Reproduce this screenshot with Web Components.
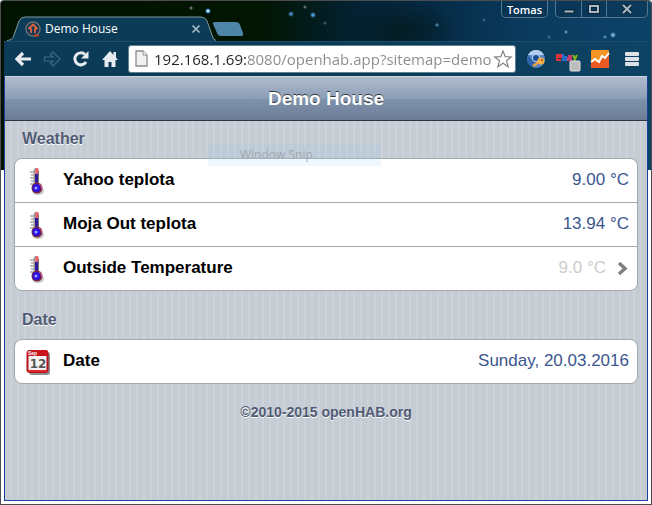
<!DOCTYPE html>
<html lang="en">
<head>
<meta charset="utf-8">
<title>Demo House</title>
<style>
  html, body {
    height: 100%;
    margin: 0;
  }
  body {
    font-family: "Liberation Sans", Arial, sans-serif;
    background: #fff;
  }
</style>
</head>
<body>

<browser-window>
  <browser-tab slot="tabs" label="Demo House"></browser-tab>
  <window-buttons slot="buttons" user="Tomas"></window-buttons>
  <browser-toolbar slot="toolbar" url="192.168.1.69:8080/openhab.app?sitemap=demo"></browser-toolbar>

  <sitemap-page heading="Demo House">
    <item-group label="Weather">
      <item-row icon="temperature" label="Yahoo teplota" value="9.00 °C"></item-row>
      <item-row icon="temperature" label="Moja Out teplota" value="13.94 °C"></item-row>
      <item-row icon="temperature" label="Outside Temperature" value="9.0 °C" href="#outside"></item-row>
    </item-group>
    <item-group label="Date">
      <item-row icon="calendar" label="Date" value="Sunday, 20.03.2016"></item-row>
    </item-group>
    <span slot="footer">©2010-2015 openHAB.org</span>
  </sitemap-page>

  <snip-label slot="overlay">Window Snip</snip-label>
</browser-window>

<script>
class BrowserWindow extends HTMLElement {
  constructor() {
    super();
    this.attachShadow({mode: "open"});
    this.shadowRoot.innerHTML = `
      <style>
        :host {
          display: flex;
          flex-direction: column;
          position: relative;
          box-sizing: border-box;
          min-height: 100vh;
          padding: 0 3px 3px 4px;
          border: 1px solid #4c4d50;
          border-width: 1px 1px 1px 0;
          border-radius: 4px 4px 0 0;
          background: #fff;
          box-shadow: inset 1px 0 #4c4d50;
          overflow: hidden;
        }
        /* night sky theme behind the frame */
        .sky {
          position: absolute;
          inset: 0 0 auto 1px;
          height: 169px;
          background:
            radial-gradient(circle at 190px 7px, #888c 0 1px, transparent 2px),
            radial-gradient(circle at 207px 10px, #bde0ff 0 1px, #2570b0 2px, transparent 3px),
            radial-gradient(circle at 290px 13px, #3d82bc 0 1px, transparent 3px),
            radial-gradient(circle at 304px 6px, #57655c 0 1px, transparent 2px),
            radial-gradient(circle at 312px 14px, #4c99d4 0 1px, transparent 3px),
            radial-gradient(circle at 324px 22px, #3c5361 0 1px, transparent 2px),
            radial-gradient(circle at 436px 24px, #427fa3 0 1px, transparent 2px),
            radial-gradient(circle at 483px 19px, #2d5c7d 0 1px, transparent 2px),
            radial-gradient(circle at 548px 36px, #316a8b 0 1px, transparent 2px),
            radial-gradient(circle at 565px 31px, #5195b9 0 1px, transparent 2px),
            radial-gradient(circle at 604px 36px, #4b86a8 0 1px, transparent 2px),
            radial-gradient(circle at 612px 34px, #6eb2dd 0 1px, transparent 3px),
            radial-gradient(ellipse 60px 30px at 400px 30px, #041c22, transparent),
            linear-gradient(90deg, #011300 0, #021502 40%, #032234 55%, #052a45 66%, #0b3c60 82%, #0c4266 100%);
        }
        .bar {
          position: relative;
          display: flex;
          align-items: flex-end;
          justify-content: space-between;
          height: 40px;
        }
        main {
          position: relative;
          flex: 1;
          display: flex;
          border: 1px solid #1a3f9c;
          border-top: 0;
        }
        ::slotted([slot="toolbar"]) { position: relative; }
        ::slotted(sitemap-page) { flex: 1; }
      </style>
      <div class="sky"></div>
      <div class="bar">
        <slot name="tabs"></slot>
        <slot name="buttons"></slot>
      </div>
      <slot name="toolbar"></slot>
      <main><slot></slot></main>
      <slot name="overlay"></slot>
    `;
  }
}

class BrowserTab extends HTMLElement {
  constructor() {
    super();
    this.attachShadow({mode: "open"});
    this.shadowRoot.innerHTML = `
      <style>
        :host {
          display: flex;
          align-items: flex-end;
          font: 12px "Open Sans", "Noto Sans", sans-serif;
          color: #fff;
        }
        .tab {
          position: relative;
          display: flex;
          align-items: center;
          box-sizing: border-box;
          width: 212px;
          height: 25px;
          padding: 0 15px 0 21px;
        }
        .shape {
          position: absolute;
          inset: 0;
        }
        .icon, .label, button { position: relative; }
        .label { margin-left: 4px; flex: 1; }
        button {
          display: flex;
          padding: 0;
          border: 0;
          background: none;
        }
        .new { margin: 0 0 5px -4px; }
      </style>
      <div class="tab">
        <svg class="shape" width="212" height="25" viewBox="0 0 212 25">
          <path d="M3 25C8 24 9 22 10 19L15 5Q17 1 21 1H197Q201 1 203 5L208 19Q209 24 212 25Z" fill="#0b3b57"/>
          <path d="M3 24.500C8 24 9 22 10 19L15 5Q17 1 21 1H197Q201 1 203 5L208 19Q209 24 212 24.500" fill="none" stroke="#8099a0"/>
        </svg>
        <svg class="icon" width="16" height="16" viewBox="0 0 16 16" fill="none">
          <circle cx="8" cy="8" r="7" stroke="#6b6d70" stroke-width="1.500"/>
          <path d="M3.500 8L8 3.500L12.500 8M6 7V12M10 7V12" stroke="#e8613a" stroke-width="1.800"/>
          <path d="M9 14.500H14" stroke="#c9441f" stroke-width="2"/>
        </svg>
        <span class="label"></span>
        <button aria-label="Close tab">
          <svg width="10" height="10" viewBox="0 0 10 10"><path d="M1.500 1.500L8.500 8.500M8.500 1.500L1.500 8.500" stroke="#a9bcc6" stroke-width="1.700"/></svg>
        </button>
      </div>
      <button class="new" aria-label="New tab">
        <svg width="32" height="14" viewBox="0 0 32 14"><path d="M3 0H24Q27 0 28 3L31 11Q32 14 29 14H9Q6 14 5 11L1 2Q0 0 3 0Z" fill="#4e86a8"/></svg>
      </button>
    `;
  }
  connectedCallback() {
    this.shadowRoot.querySelector(".label").textContent = this.getAttribute("label");
  }
}

class WindowButtons extends HTMLElement {
  constructor() {
    super();
    this.attachShadow({mode: "open"});
    this.shadowRoot.innerHTML = `
      <style>
        :host {
          display: flex;
          align-self: flex-start;
          gap: 7px;
        }
        button {
          display: flex;
          align-items: center;
          justify-content: center;
          box-sizing: border-box;
          height: 17px;
          padding: 0;
          border: 0;
          background: none;
          color: #fff;
          font: 600 11px "Open Sans", "Noto Sans", sans-serif;
        }
        .user, .group {
          border: 1px solid #55788e;
          border-top: 0;
          border-radius: 0 0 5px 5px;
          background: #0a2f4a66;
        }
        .user { width: 47px; }
        .group { display: flex; height: 17px; box-sizing: border-box; }
        .group button { width: 25px; height: 16px; }
        .group button + button { border-left: 1px solid #55788e; }
        .group button:last-child { width: 41px; }
      </style>
      <button class="user"></button>
      <div class="group">
        <button aria-label="Minimize"><svg width="12" height="10" viewBox="0 0 12 10"><rect x="1" y="6" width="10" height="3" fill="#a9bac6" stroke="#0a2233"/></svg></button>
        <button aria-label="Maximize"><svg width="12" height="10" viewBox="0 0 12 10"><path d="M2 2H10V8H2Z" fill="none" stroke="#0a2233" stroke-width="4"/><path d="M2 2H10V8H2Z" fill="none" stroke="#a9bac6" stroke-width="2"/></svg></button>
        <button aria-label="Close"><svg width="12" height="10" viewBox="0 0 12 10"><path d="M2 1L10 9M10 1L2 9" stroke="#0a2233" stroke-width="4"/><path d="M2 1L10 9M10 1L2 9" stroke="#a9bac6" stroke-width="2"/></svg></button>
      </div>
    `;
  }
  connectedCallback() {
    this.shadowRoot.querySelector(".user").textContent = this.getAttribute("user");
  }
}

class BrowserToolbar extends HTMLElement {
  constructor() {
    super();
    this.attachShadow({mode: "open"});
    this.shadowRoot.innerHTML = `
      <style>
        :host {
          display: flex;
          align-items: center;
          height: 35px;
          padding-left: 4px;
          background: linear-gradient(90deg, #0b3b57, #0b3b57 60%, #0d4364);
          box-shadow: inset 0 1px #1b4f6d;
        }
        button {
          display: flex;
          align-items: center;
          justify-content: center;
          flex: none;
          width: 29px;
          height: 28px;
          padding: 0;
          border: 0;
          background: none;
        }
        .ext { width: 32px; }
        .omnibox {
          display: flex;
          align-items: center;
          flex: 1;
          min-width: 0;
          box-sizing: border-box;
          height: 28px;
          margin: 0 4px;
          padding: 0 2px 0 6px;
          border: 1px solid #5e8290;
          border-radius: 3px;
          background: #fff;
        }
        .omnibox button { width: 20px; }
        .page { flex: none; margin-right: 6px; }
        input {
          flex: 1;
          min-width: 0;
          height: 24px;
          padding: 0;
          border: 0;
          outline: 0;
          font: 15px "Open Sans", "Noto Sans", sans-serif;
          /* host part is dark, port and path are grey */
          background: linear-gradient(90deg, #222 92px, #8a8a8a 92px);
          -webkit-background-clip: text;
          background-clip: text;
          -webkit-text-fill-color: transparent;
        }
      </style>
      <button aria-label="Back"><svg width="18" height="16" viewBox="0 0 18 16"><path d="M9 2L3 8L9 14M3 8H17" fill="none" stroke="#e8ecf0" stroke-width="3.200"/></svg></button>
      <button aria-label="Forward"><svg width="18" height="16" viewBox="0 0 18 16"><path d="M1.500 6H10L7.500 3.500L10 1L17 8L10 15L7.500 12.500L10 10H1.500Z" fill="none" stroke="#3f6880" stroke-width="1.200"/></svg></button>
      <button aria-label="Reload"><svg width="18" height="18" viewBox="0 0 18 18"><path d="M14 12A6 6 0 1 1 13 4.500" fill="none" stroke="#e8ecf0" stroke-width="3"/><path d="M16.500 1V8.500H9Z" fill="#e8ecf0"/></svg></button>
      <button aria-label="Home"><svg width="18" height="18" viewBox="0 0 18 18"><path d="M9 1L1 10H3.500V17H7.500V12H10.500V17H14.500V10H17L15 7.500V2H12.500V5Z" fill="#e8ecf0"/></svg></button>
      <div class="omnibox">
        <svg class="page" width="13" height="17" viewBox="0 0 13 17"><path d="M1 1H8L12 5V16H1Z" fill="#f1f1f1" stroke="#8c8c8c" stroke-width="1.300"/><path d="M8 1V5H12" fill="#fff" stroke="#8c8c8c"/></svg>
        <input type="text" aria-label="Address">
        <button aria-label="Bookmark"><svg width="20" height="18" viewBox="0 0 18 18"><path d="M9 1L11.200 6.700L17.200 7L12.500 10.800L14.100 16.700L9 13.300L3.900 16.700L5.500 10.800L0.800 7L6.800 6.700Z" fill="#fff" stroke="#808080" stroke-width="1.200"/></svg></button>
      </div>
      <button class="ext" aria-label="Chromium key">
        <svg width="20" height="20" viewBox="0 0 20 20"><circle cx="10" cy="10" r="9" fill="#5588c8"/><path d="M2 6A9 9 0 0 1 18 6L10 6.500Z" fill="#b4cfee"/><path d="M2 6A9 9 0 0 0 8 18.700L11 13L6 11Z" fill="#2f64a8"/><circle cx="10" cy="9" r="4.200" fill="#a9c9ea"/><circle cx="10" cy="9" r="3" fill="#1d4f96"/><path d="M13 13L7 17" stroke="#f2a33a" stroke-width="2.400"/><circle cx="15" cy="12" r="3.500" fill="#f5ad48"/><circle cx="16" cy="11" r="1" fill="#8e5618"/></svg>
      </button>
      <button class="ext" aria-label="ebay">
        <svg width="26" height="26" viewBox="0 0 26 26"><g fill="none" stroke-width="2"><path d="M2 11H6V9H2V14H6" stroke="#e53238"/><path d="M8 8V14H11V11H9" stroke="#2b6fd6"/><path d="M13 10H16V14H13V12H15" stroke="#c43c6a"/><path d="M18 9L20 13M22 9L19 15" stroke="#86b817"/></g><rect x="15" y="15" width="10" height="10" rx="1" fill="#bdbdbd" stroke="#e2e2e2"/></svg>
      </button>
      <button class="ext" aria-label="Analytics">
        <svg width="20" height="20" viewBox="0 0 20 20"><rect x="1" y="1" width="18" height="18" rx="1" fill="#f79426"/><path d="M1 14L5 12L9 14L12 8L15 10L19 5V19H1Z" fill="#ea5a22"/><path d="M1 13L5 10L9 13L12 7L15 9L19 4" fill="none" stroke="#fff" stroke-width="2"/></svg>
      </button>
      <button class="ext" aria-label="Menu">
        <svg width="14" height="16" viewBox="0 0 14 16" fill="#dde2ea"><rect y="1" width="14" height="4" rx="1"/><rect y="6" width="14" height="4" rx="1"/><rect y="11" width="14" height="4" rx="1"/></svg>
      </button>
    `;
  }
  connectedCallback() {
    this.shadowRoot.querySelector("input").value = this.getAttribute("url");
  }
}

class SitemapPage extends HTMLElement {
  constructor() {
    super();
    this.attachShadow({mode: "open"});
    this.shadowRoot.innerHTML = `
      <style>
        :host {
          display: block;
          background: repeating-linear-gradient(90deg, #c5ccd4 0 5px, #cbd2d8 5px 7px);
          color: #505a74;
        }
        header {
          display: flex;
          align-items: center;
          justify-content: center;
          box-sizing: border-box;
          height: 45px;
          border-top: 1px solid #cdd5df;
          border-bottom: 1px solid #2d3642;
          background: linear-gradient(#b0bccd, #8b9db5 50%, #8094ae 50%, #6b7b95);
        }
        h1 {
          margin: 0;
          font-size: 19px;
          line-height: 24px;
          color: #fff;
          text-shadow: 0 -1px #2d3642;
        }
        footer {
          padding-top: 19px;
          font-size: 14px;
          line-height: 18px;
          font-weight: bold;
          text-align: center;
          text-shadow: 0 1px #fff;
        }
      </style>
      <header><h1></h1></header>
      <slot></slot>
      <footer><slot name="footer"></slot></footer>
    `;
  }
  connectedCallback() {
    this.shadowRoot.querySelector("h1").textContent = this.getAttribute("heading");
  }
}

class ItemGroup extends HTMLElement {
  constructor() {
    super();
    this.attachShadow({mode: "open"});
    this.shadowRoot.innerHTML = `
      <style>
        :host {
          display: block;
          padding: 8px 9px 0;
        }
        :host(:not(:first-child)) { padding-top: 19px; }
        h2 {
          margin: 0 8px 9px;
          font-size: 16px;
          line-height: 20px;
          color: #505a74;
          text-shadow: 0 1px #fff;
        }
        .list {
          border: 1px solid #a4a9ad;
          border-radius: 8px;
          background: #fff;
          overflow: hidden;
        }
        ::slotted(item-row:not(:first-child)) { border-top: 1px solid #a4a9ad; }
      </style>
      <h2></h2>
      <div class="list"><slot></slot></div>
    `;
  }
  connectedCallback() {
    this.shadowRoot.querySelector("h2").textContent = this.getAttribute("label");
  }
}

const icons = {
  temperature: `
    <svg width="26" height="30" viewBox="0 0 26 30">
      <ellipse cx="13" cy="25" rx="6" ry="4" fill="#9998"/>
      <path d="M5 6H9M6 9H9M5 12H9M6 15H9M5 18H9" stroke="#a8a8a8" stroke-width="1.500"/>
      <path d="M8.500 4Q10.500 0 13.500 3V17H8.500Z" fill="#a29c9c"/>
      <path d="M10.500 3Q12 1 13.500 3V8H10.500Z" fill="#f0606a"/>
      <rect x="10" y="8" width="3" height="13" fill="#301a9c"/>
      <path d="M13.500 5V18" stroke="#777"/>
      <circle cx="12" cy="22" r="5.500" fill="#7b2540"/>
      <circle cx="11.500" cy="22" r="4" fill="#2a12e0"/>
      <circle cx="11" cy="22" r="1.500" fill="#a99cff"/>
      <path d="M14 18Q17 19 17 23" fill="none" stroke="#ef7180"/>
    </svg>`,
  calendar: `
    <svg width="26" height="30" viewBox="0 0 26 30">
      <rect x="4" y="5" width="21" height="23" rx="3" fill="#555a"/>
      <rect x="2.500" y="4" width="20" height="21" rx="2.500" fill="#f4f4f4" stroke="#b3121a" stroke-width="2"/>
      <path d="M2 9V6Q2 3 4 3H21Q23 3 23 6V9Z" fill="#c8141c"/>
      <rect x="3" y="23" width="19" height="2" fill="#e2262e"/>
      <text x="3" y="8" font-family="Liberation Sans" font-size="5" font-weight="bold" fill="#fff">Sep</text>
      <text x="13" y="21" font-family="DejaVu Sans" font-size="12" font-weight="bold" text-anchor="middle" fill="#555">12</text>
    </svg>`
};

class ItemRow extends HTMLElement {
  constructor() {
    super();
    this.attachShadow({mode: "open"});
  }
  connectedCallback() {
    const href = this.getAttribute("href");
    const tag = href ? "a" : "div";
    this.shadowRoot.innerHTML = `
      <style>
        :host {
          display: block;
          font-size: 17px;
          line-height: 20px;
        }
        .row {
          display: flex;
          align-items: center;
          height: 43px;
          padding: 0 8px 0 10px;
          color: #3b5690;
          text-decoration: none;
        }
        a.row { color: #ccc; }
        .label {
          flex: 1;
          margin-left: 12px;
          font-weight: bold;
          color: #000;
        }
        .label, .value { padding-bottom: 2px; }
        .chevron { margin-left: 11px; }
      </style>
      <${tag} class="row" ${href ? `href="${href}"` : ""}>
        ${icons[this.getAttribute("icon")]}
        <span class="label">${this.getAttribute("label")}</span>
        <span class="value">${this.getAttribute("value")}</span>
        ${href ? `<svg class="chevron" width="12" height="14" viewBox="0 0 12 14"><path d="M2 1L8 6.500L2 12" fill="none" stroke="#808080" stroke-width="3.500"/></svg>` : ""}
      </${tag}>
    `;
  }
}

class SnipLabel extends HTMLElement {
  constructor() {
    super();
    this.attachShadow({mode: "open"});
    this.shadowRoot.innerHTML = `
      <style>
        :host {
          position: absolute;
          left: 208px;
          top: 143px;
          box-sizing: border-box;
          width: 173px;
          height: 22px;
          padding-left: 32px;
          background: #91c9f722;
          color: #9fa8b0;
          font: 12px/22px "Open Sans", "Noto Sans", sans-serif;
        }
      </style>
      <slot></slot>
    `;
  }
}

customElements.define("browser-window", BrowserWindow);
customElements.define("browser-tab", BrowserTab);
customElements.define("window-buttons", WindowButtons);
customElements.define("browser-toolbar", BrowserToolbar);
customElements.define("sitemap-page", SitemapPage);
customElements.define("item-group", ItemGroup);
customElements.define("item-row", ItemRow);
customElements.define("snip-label", SnipLabel);
</script>
</body>
</html>
